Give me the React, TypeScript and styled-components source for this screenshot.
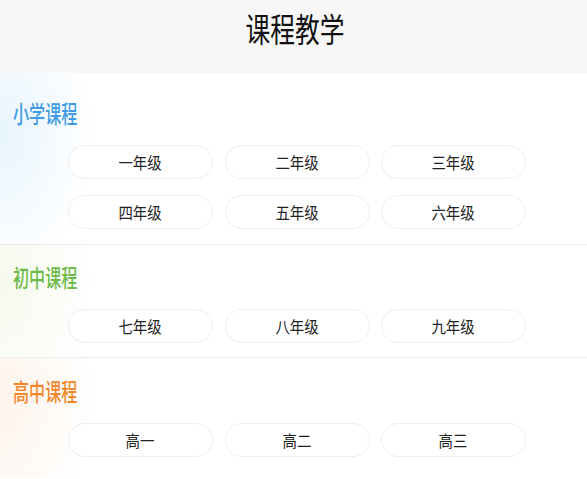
import React from "react";
import styled, { createGlobalStyle } from "styled-components";

const Global = createGlobalStyle`
  html, body { margin: 0; padding: 0; background: #fff; }
  body { font-family: "Noto Sans CJK SC", "Noto Sans", sans-serif; }
`;

const Page = styled.div`
  width: 587px;
  min-height: 479px;
  background: #fff;
  overflow: hidden;
`;

const Header = styled.header`
  height: 73px;
  background: #f7f7f7;
  display: flex;
  align-items: center;
  justify-content: center;
`;

const Title = styled.h1`
  margin: 0 0 17px 3px;
  font-size: 33px;
  line-height: 36px;
  font-weight: 400;
  color: #111;
  display: inline-block;
  transform: scaleX(0.75);
`;

const Section = styled.section<{ $top: number; $tint: string; $bottom: number; $last?: boolean }>`
  padding: ${(p) => p.$top}px 0 ${(p) => p.$bottom}px;
  border-bottom: ${(p) => (p.$last ? "none" : "1px solid #ececec")};
  background: radial-gradient(95px 150px at 0 35%, ${(p) => p.$tint}, rgba(255, 255, 255, 0));
  display: flex;
  flex-direction: column;
  gap: 20px;
`;

const Heading = styled.h2<{ $color: string }>`
  margin: 0 0 0 13px;
  height: 24px;
  font-size: 24px;
  line-height: 24px;
  font-weight: 500;
  color: ${(p) => p.$color};
  transform: scaleX(0.67);
  transform-origin: left center;
  white-space: nowrap;
`;

const Grid = styled.div`
  margin-left: 68px;
  display: grid;
  grid-template-columns: repeat(3, 145px);
  column-gap: 11.5px;
  row-gap: 16px;
`;

const Grade = styled.button`
  height: 34px;
  border: 1px solid #eeeeee;
  border-radius: 17px;
  background: #fff;
  padding: 0;
  display: flex;
  align-items: center;
  justify-content: center;
  font-family: "Noto Sans CJK SC", "Noto Sans", sans-serif;
  font-size: 16px;
  color: #222;
  cursor: pointer;
`;

const GradeText = styled.span`
  display: inline-block;
  transform: scaleX(0.9);
`;

const sections = [
  {
    name: "小学课程",
    color: "#3f9be6",
    tint: "rgba(226, 242, 253, 0.8)",
    top: 28,
    bottom: 15,
    items: ["一年级", "二年级", "三年级", "四年级", "五年级", "六年级"],
  },
  {
    name: "初中课程",
    color: "#6cbb47",
    tint: "rgba(244, 248, 234, 0.85)",
    top: 20,
    bottom: 14,
    items: ["七年级", "八年级", "九年级"],
  },
  {
    name: "高中课程",
    color: "#f2872a",
    tint: "rgba(253, 241, 232, 0.85)",
    top: 21,
    bottom: 21,
    items: ["高一", "高二", "高三"],
  },
];

export default function App() {
  return (
    <>
      <Global />
      <Page>
        <Header>
          <Title>课程教学</Title>
        </Header>
        {sections.map((s, i) => (
          <Section
            key={s.name}
            $top={s.top}
            $bottom={s.bottom}
            $tint={s.tint}
            $last={i === sections.length - 1}
          >
            <Heading $color={s.color}>{s.name}</Heading>
            <Grid>
              {s.items.map((g) => (
                <Grade key={g}>
                  <GradeText>{g}</GradeText>
                </Grade>
              ))}
            </Grid>
          </Section>
        ))}
      </Page>
    </>
  );
}
